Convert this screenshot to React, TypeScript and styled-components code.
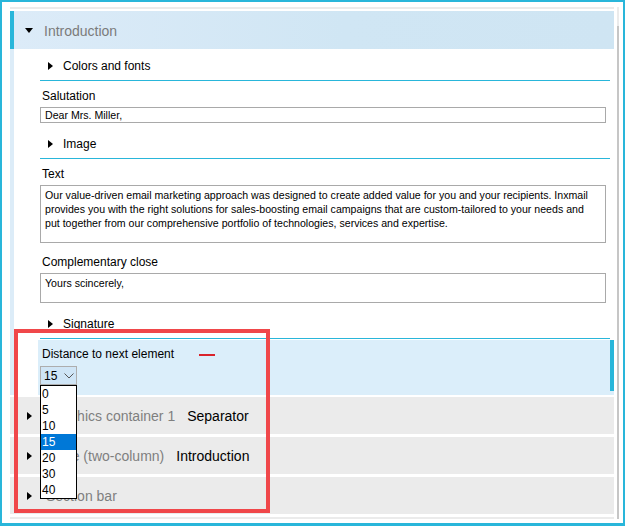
import React from 'react';
import styled, { createGlobalStyle } from 'styled-components';

const Global = createGlobalStyle`
  html, body { margin: 0; padding: 0; background: #fff; }
  body { font-family: "Liberation Sans", Arial, sans-serif; color: #000; }
  * { box-sizing: border-box; }
`;

const CYAN = '#29b6da';

const Frame = styled.div`
  position: relative;
  width: 625px;
  height: 526px;
  border: 2px solid ${CYAN};
  border-bottom-width: 3px;
  padding: 5px 0 0 8px;
  display: flex;
  gap: 3px;
  overflow: hidden;
`;

const Main = styled.div`
  width: 604px;
  display: flex;
  flex-direction: column;
`;

const Scrollbar = styled.div`
  width: 2px;
  height: 512px;
  background: linear-gradient(to bottom, #ebebeb 0, #ebebeb 19px, #c6c6c6 19px, #c6c6c6 100%);
`;

const GreyLine = styled.div<{ $top?: boolean }>`
  height: 2px;
  background: #ebebeb;
  margin-bottom: ${p => (p.$top ? '2px' : '0')};
`;

const Header = styled.div`
  height: 38px;
  border-left: 4px solid ${CYAN};
  background: linear-gradient(90deg, #dcebf8 0%, #d0e6f4 55%, #cfe5f3 100%);
  display: flex;
  align-items: center;
  padding: 1px 0 0 11px;
  gap: 11px;
  font-size: 14px;
  color: #7b7b7b;
`;

const TriDown = styled.span`
  width: 0;
  height: 0;
  border-left: 4.5px solid transparent;
  border-right: 4.5px solid transparent;
  border-top: 5px solid #000;
`;

const TriRight = styled.span`
  width: 0;
  height: 0;
  border-top: 4px solid transparent;
  border-bottom: 4px solid transparent;
  border-left: 5px solid #000;
  flex: none;
`;

const Body = styled.div`
  border-left: 4px solid #dcecf8;
  padding: 0 4px 0 26px;
  display: flex;
  flex-direction: column;
`;

const ExpandRow = styled.div`
  height: 32px;
  border-bottom: 1px solid ${CYAN};
  padding: 9px 0 6px 8px;
  display: flex;
  align-items: center;
  gap: 10px;
  font-size: 12px;
  line-height: 16px;
`;

const Field = styled.div`
  display: flex;
  flex-direction: column;
  margin-bottom: 4px;
`;

const Label = styled.div`
  padding: 8px 0 0 2px;
  height: 26px;
  font-size: 12px;
  line-height: 15px;
`;

const Input = styled.div<{ $h: number }>`
  width: 566px;
  height: ${p => p.$h}px;
  border: 1px solid #a9a9a9;
  padding: ${p => (p.$h > 20 ? '2px 4px' : '0 4px')};
  font-size: 10.6px;
  line-height: 14px;
  background: #fff;
`;

const Line = styled.span`
  display: block;
  white-space: nowrap;
`;

const DistanceArea = styled.div`
  margin: 1px -4px 0 -2px;
  height: 55px;
  background: #dbeefa;
  display: flex;
  justify-content: space-between;
`;

const DistanceContent = styled.div`
  padding: 7px 0 0 4px;
  display: flex;
  flex-direction: column;
  gap: 4px;
`;

const DistanceLabel = styled.div`
  display: flex;
  align-items: center;
  font-size: 12px;
  line-height: 15px;
`;

const LabelText = styled.span`
  width: 157px;
  white-space: nowrap;
`;

const RedDash = styled.span`
  width: 16px;
  height: 2px;
  background: #d9232b;
`;

const Stripe = styled.div`
  width: 4px;
  height: 51px;
  background: ${CYAN};
`;

const SelectWrap = styled.div`
  position: relative;
  margin-left: -2px;
  width: 37px;
`;

const SelectBox = styled.div`
  height: 19px;
  border: 1px solid #adadad;
  background: #cfe5f6;
  display: flex;
  align-items: center;
  padding: 1px 0 0 3px;
  gap: 7px;
  font-size: 12px;
`;

const Dropdown = styled.ul`
  position: absolute;
  top: 100%;
  left: 0;
  width: 37px;
  margin: 0;
  padding: 0;
  list-style: none;
  border: 1px solid #000;
  background: #fff;
  z-index: 5;
`;

const Option = styled.li<{ $sel?: boolean }>`
  height: 16px;
  padding: 1px 0 0 1px;
  line-height: 15px;
  font-size: 12px;
  background: ${p => (p.$sel ? '#0078d7' : '#fff')};
  color: ${p => (p.$sel ? '#fff' : '#000')};
`;

const Rows = styled.div`
  margin-top: 2px;
  display: flex;
  flex-direction: column;
  gap: 3px;
  margin-bottom: 3px;
`;

const GreyRow = styled.div`
  height: 37px;
  background: #ebebeb;
  display: flex;
  align-items: center;
  padding-left: 17px;
  font-size: 14px;
`;

const RowType = styled.span`
  margin-left: 14px;
  color: #7f7f7f;
`;

const RowName = styled.span`
  margin-left: 12px;
  color: #000;
`;

const Highlight = styled.div`
  position: absolute;
  left: 12px;
  top: 327px;
  width: 256px;
  height: 184px;
  border: 4px solid #f0474a;
  pointer-events: none;
  z-index: 10;
`;

const options = ['0', '5', '10', '15', '20', '30', '40'];

const rows = [
  { type: 'Graphics container 1', name: 'Separator' },
  { type: 'Table (two-column)', name: 'Introduction' },
  { type: 'Section bar', name: '' },
];

export default function App() {
  return (
    <>
      <Global />
      <Frame>
        <Main>
          <GreyLine $top />
          <Header>
            <TriDown />
            <span>Introduction</span>
          </Header>
          <Body>
            <ExpandRow>
              <TriRight />
              <span>Colors and fonts</span>
            </ExpandRow>
            <Field>
              <Label>Salutation</Label>
              <Input $h={16}>Dear Mrs. Miller,</Input>
            </Field>
            <ExpandRow>
              <TriRight />
              <span>Image</span>
            </ExpandRow>
            <Field>
              <Label>Text</Label>
              <Input $h={58}>
                <Line>Our value-driven email marketing approach was designed to create added value for you and your recipients. Inxmail</Line>
                <Line>provides you with the right solutions for sales-boosting email campaigns that are custom-tailored to your needs and</Line>
                <Line>put together from our comprehensive portfolio of technologies, services and expertise.</Line>
              </Input>
            </Field>
            <Field>
              <Label>Complementary close</Label>
              <Input $h={30}>Yours scincerely,</Input>
            </Field>
            <ExpandRow>
              <TriRight />
              <span>Signature</span>
            </ExpandRow>
            <DistanceArea>
              <DistanceContent>
                <DistanceLabel>
                  <LabelText>Distance to next element</LabelText>
                  <RedDash />
                </DistanceLabel>
                <SelectWrap>
                  <SelectBox>
                    <span>15</span>
                    <svg width="10" height="6" viewBox="0 0 10 6">
                      <path d="M0.5 0.5 L5 5 L9.5 0.5" fill="none" stroke="#555" strokeWidth="1" />
                    </svg>
                  </SelectBox>
                  <Dropdown>
                    {options.map(o => (
                      <Option key={o} $sel={o === '15'}>{o}</Option>
                    ))}
                  </Dropdown>
                </SelectWrap>
              </DistanceContent>
              <Stripe />
            </DistanceArea>
          </Body>
          <Rows>
            {rows.map(r => (
              <GreyRow key={r.type}>
                <TriRight />
                <RowType>{r.type}</RowType>
                {r.name && <RowName>{r.name}</RowName>}
              </GreyRow>
            ))}
          </Rows>
          <GreyLine />
        </Main>
        <Scrollbar />
        <Highlight />
      </Frame>
    </>
  );
}
